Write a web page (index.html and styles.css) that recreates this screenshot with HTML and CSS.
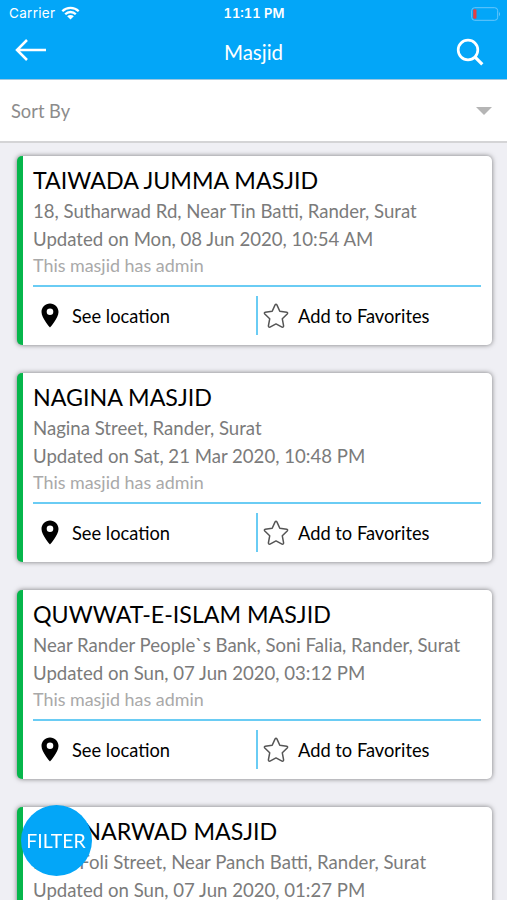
FILE: index.html
```html
<!DOCTYPE html>
<html lang="en">
<head>
<meta charset="utf-8">
<title>Masjid</title>
<link rel="stylesheet" href="styles.css">
</head>
<body>
<svg width="0" height="0" class="defs">
  <symbol id="pin" viewBox="0 0 18 25"><path fill-rule="evenodd" d="M9 .5C4.200.5.5 4.200.5 9c0 6 8.500 15.500 8.500 15.500S17.500 15 17.500 9C17.500 4.200 13.800.5 9 .5zM9 5.500a3.300 3.300 0 1 1 0 6.600 3.300 3.300 0 0 1 0-6.600z"/></symbol>
  <symbol id="star" viewBox="0 0 26 26"><path fill="none" stroke="#555" stroke-width="1.500" stroke-linejoin="round" d="M12.100 1.900Q13 .5 13.900 1.900L16.800 8.300L23.700 9.200Q25.300 9.700 24.200 11L19.300 15.800L20.600 22.800Q20.600 24.600 19 24.100L13 20.900L7 24.100Q5.400 24.600 5.400 22.800L6.700 15.800L1.800 11Q.7 9.700 2.300 9.200L9.200 8.300Z"/></symbol>
</svg>
<header class="header">
  <div class="status">
    <div class="carrier"><span>Carrier</span>
      <svg class="wifi" width="19" height="14" viewBox="0 0 18 14"><g fill="none" stroke="#fff" stroke-width="2.300"><path d="M.8 5.200a11.600 11.600 0 0 1 16.400 0M3.700 8.200a7.500 7.500 0 0 1 10.600 0"/></g><path fill="#fff" d="M5.700 10.300a4.700 4.700 0 0 1 6.600 0L9 13.600z"/></svg>
    </div>
    <div class="time">11:11 PM</div>
    <svg class="battery" width="30" height="14" viewBox="0 0 30 14"><rect x=".7" y=".7" width="26" height="12.600" rx="3" fill="none" stroke="#68c7fc"/><rect x="2.200" y="2.300" width="3.300" height="9.400" rx="1.200" fill="#e43e43"/><path fill="#68c7fc" d="M28 4.700q2 2.300 0 4.600z"/></svg>
  </div>
  <nav class="nav">
    <svg class="back" width="32" height="24" viewBox="0 0 32 24"><path d="M31 12H2M12 2L2 12L12 22" fill="none" stroke="#fff" stroke-width="2.500"/></svg>
    <h1>Masjid</h1>
    <svg width="28" height="28" viewBox="0 0 28 28"><g fill="none" stroke="#fff" stroke-width="2.700"><circle cx="12" cy="12" r="9.800"/><path d="M18.800 18.800L26.300 26.300" stroke-width="3.200"/></g></svg>
  </nav>
</header>
<div class="sort"><span>Sort By</span><i class="caret"></i></div>
<main class="list">
  <article class="card">
    <h2>TAIWADA JUMMA MASJID</h2>
    <p>18, Sutharwad Rd, Near Tin Batti, Rander, Surat</p>
    <p>Updated on Mon, 08 Jun 2020, 10:54 AM</p>
    <p class="admin">This masjid has admin</p>
    <div class="actions"><div class="location"><svg width="18" height="25"><use href="#pin"/></svg><span>See location</span></div><div class="favorite"><svg width="26" height="26"><use href="#star"/></svg><span>Add to Favorites</span></div></div>
  </article>
  <article class="card">
    <h2>NAGINA MASJID</h2>
    <p>Nagina Street, Rander, Surat</p>
    <p>Updated on Sat, 21 Mar 2020, 10:48 PM</p>
    <p class="admin">This masjid has admin</p>
    <div class="actions"><div class="location"><svg width="18" height="25"><use href="#pin"/></svg><span>See location</span></div><div class="favorite"><svg width="26" height="26"><use href="#star"/></svg><span>Add to Favorites</span></div></div>
  </article>
  <article class="card">
    <h2>QUWWAT-E-ISLAM MASJID</h2>
    <p>Near Rander People`s Bank, Soni Falia, Rander, Surat</p>
    <p>Updated on Sun, 07 Jun 2020, 03:12 PM</p>
    <p class="admin">This masjid has admin</p>
    <div class="actions"><div class="location"><svg width="18" height="25"><use href="#pin"/></svg><span>See location</span></div><div class="favorite"><svg width="26" height="26"><use href="#star"/></svg><span>Add to Favorites</span></div></div>
  </article>
  <article class="card">
    <h2>CHUNARWAD MASJID</h2>
    <p>Nava Foli Street, Near Panch Batti, Rander, Surat</p>
    <p>Updated on Sun, 07 Jun 2020, 01:27 PM</p>
  </article>
</main>
<button class="filter">FILTER</button>
</body>
</html>
```

FILE: styles.css
```css
* { box-sizing: border-box; }
html, body { height: 100%; overflow: hidden; }
body { margin: 0; background: #efeff4; font-family: Lato, Carlito, sans-serif; color: #000; display: flex; flex-direction: column; }
h1, h2, p { margin: 0; font-weight: 400; white-space: nowrap; }
svg { display: block; flex: none; }
.defs { position: absolute; }
.header { flex: none; height: 80px; background: #03a6f8; color: #fff; border-bottom: 1px solid #9fc7df; }
.status { height: 27px; display: grid; grid-template-columns: 1fr auto 1fr; align-items: center; padding: 0 6px 0 9px; font: 13.500px/27px Inter, sans-serif; }
.carrier { display: flex; gap: 6px; letter-spacing: .3px; }
.wifi { margin-top: 6px; }
.time { font-weight: 600; font-size: 13px; font-feature-settings: "tnum"; margin-left: -2px; }
.battery { justify-self: end; }
.nav { height: 50px; display: grid; grid-template-columns: 1fr auto 1fr; align-items: center; padding: 0 23px 0 15px; }
.nav h1 { font-size: 20.500px; margin-left: 8px; }
.back { margin-top: -4px; }
.nav svg:last-child { justify-self: end; }
.sort { flex: none; height: 63px; background: #fff; border-bottom: 2px solid #d4d4d6; display: flex; align-items: center; justify-content: space-between; padding: 0 15px 0 11px; font-size: 18.300px; color: #8c8c8c; }
.caret { border: 8px solid transparent; border-top-color: #b5b5b5; border-bottom: 0; }
.list { flex: 1; min-height: 0; overflow: hidden; padding: 13px 15px 0 17px; display: flex; flex-direction: column; gap: 28px; }
.card { height: 189px; flex: none; background: #fff; border-left: 6px solid #06b64b; border-radius: 5px; box-shadow: 0 0 5px rgba(0,0,0,.5); padding: 7px 11px 0 10px; }
h2 { font-size: 23.230px; line-height: 34px; margin-bottom: 1px; }
p { font-size: 18.600px; line-height: 27.500px; color: #7b7b7b; }
.admin { font-size: 17.900px; color: #a9a9a9; line-height: 25px; }
.actions { border-top: 2px solid #6accf4; margin-top: 7px; padding-top: 9px; display: flex; font-size: 18.300px; }
.location, .favorite { display: flex; align-items: center; height: 39px; }
.location { width: 223px; padding-left: 8px; gap: 13px; }
.favorite { border-left: 2px solid #6accf4; padding-left: 5px; gap: 9px; }
.filter { position: fixed; left: 20.500px; bottom: 24.500px; width: 71px; height: 71px; border: 0; padding: 0; border-radius: 50%; background: #03a6f8; color: #fff; font: 19.400px Lato, Carlito, sans-serif; }
```
